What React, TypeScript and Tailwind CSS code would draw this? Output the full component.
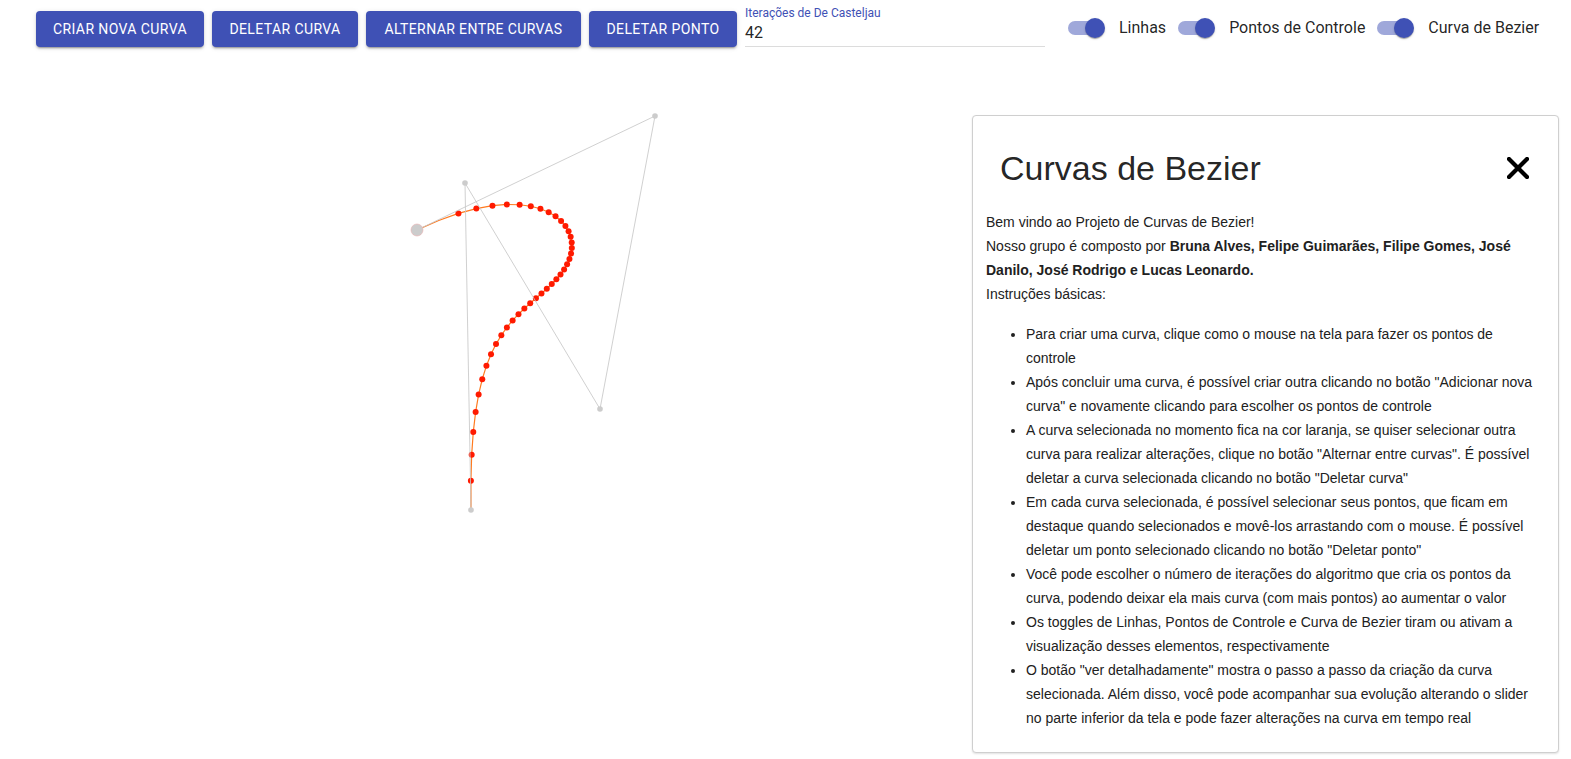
import React from "react";

type Pt = { x: number; y: number };

// control polygon, in page coordinates
const controlPoints: Pt[] = [
  { x: 417, y: 230 },
  { x: 655, y: 116 },
  { x: 600, y: 409 },
  { x: 465, y: 183 },
  { x: 471, y: 510 },
];

const ITERATIONS = 42;
const TOOLBAR_H = 58;

function deCasteljau(points: Pt[], t: number): Pt {
  let pts = points.slice();
  while (pts.length > 1) {
    const next: Pt[] = [];
    for (let i = 0; i < pts.length - 1; i++) {
      next.push({
        x: (1 - t) * pts[i].x + t * pts[i + 1].x,
        y: (1 - t) * pts[i].y + t * pts[i + 1].y,
      });
    }
    pts = next;
  }
  return pts[0];
}

const curve: Pt[] = Array.from({ length: ITERATIONS + 1 }, (_, i) =>
  deCasteljau(controlPoints, i / ITERATIONS)
);

const buttons = [
  { label: "Criar nova curva", w: "w-[168px]" },
  { label: "Deletar curva", w: "w-[146px]" },
  { label: "Alternar entre curvas", w: "w-[215px]" },
  { label: "Deletar ponto", w: "w-[148px]" },
];

const toggles = ["Linhas", "Pontos de Controle", "Curva de Bezier"];

const instructions = [
  "Para criar uma curva, clique como o mouse na tela para fazer os pontos de controle",
  'Após concluir uma curva, é possível criar outra clicando no botão "Adicionar nova curva" e novamente clicando para escolher os pontos de controle',
  'A curva selecionada no momento fica na cor laranja, se quiser selecionar outra curva para realizar alterações, clique no botão "Alternar entre curvas". É possível deletar a curva selecionada clicando no botão "Deletar curva"',
  'Em cada curva selecionada, é possível selecionar seus pontos, que ficam em destaque quando selecionados e movê-los arrastando com o mouse. É possível deletar um ponto selecionado clicando no botão "Deletar ponto"',
  "Você pode escolher o número de iterações do algoritmo que cria os pontos da curva, podendo deixar ela mais curva (com mais pontos) ao aumentar o valor",
  "Os toggles de Linhas, Pontos de Controle e Curva de Bezier tiram ou ativam a visualização desses elementos, respectivamente",
  'O botão "ver detalhadamente" mostra o passo a passo da criação da curva selecionada. Além disso, você pode acompanhar sua evolução alterando o slider no parte inferior da tela e pode fazer alterações na curva em tempo real',
];

function Toggle({ label }: { label: string }) {
  return (
    <div className="flex items-center">
      <span className="relative block h-[38px] w-[58px] flex-none">
        <span className="absolute left-[12px] top-[12px] h-[14px] w-[34px] rounded-full bg-[#9fa8da]" />
        <span className="absolute left-[29px] top-[9px] h-[20px] w-[20px] rounded-full bg-[#3f51b5] shadow-[0_2px_1px_-1px_rgba(0,0,0,0.2),0_1px_1px_0_rgba(0,0,0,0.14),0_1px_3px_0_rgba(0,0,0,0.12)]" />
      </span>
      <span className="ml-[5px] text-[16px] leading-[24px] text-[rgba(0,0,0,0.87)]">{label}</span>
    </div>
  );
}

function Canvas() {
  return (
    <svg width={972} height={759 - TOOLBAR_H} className="block flex-none">
      <g transform={`translate(0,${-TOOLBAR_H})`}>
        <polyline
          points={curve.map((p) => `${p.x},${p.y}`).join(" ")}
          fill="none"
          stroke="#ff7a1f"
          strokeWidth={1.2}
        />
        {curve.slice(2, ITERATIONS).map((p, i) => (
          <circle key={i} cx={p.x} cy={p.y} r={3} fill="#ff1a00" />
        ))}
        <polyline
          points={controlPoints.map((p) => `${p.x},${p.y}`).join(" ")}
          fill="none"
          stroke="#c8c8c8"
          strokeOpacity={0.85}
          strokeWidth={1}
        />
        {controlPoints.map((p, i) =>
          i === 0 ? (
            <circle key={i} cx={p.x} cy={p.y} r={6} fill="#cccccc" stroke="#eab0b0" strokeWidth={0.6} />
          ) : (
            <circle key={i} cx={p.x} cy={p.y} r={2.8} fill="#cccccc" />
          )
        )}
      </g>
    </svg>
  );
}

function InfoCard() {
  return (
    <div className="mt-[57px] h-[638px] w-[587px] flex-none rounded-[4px] border border-[#cfcfcf] bg-white px-[13px] pt-[15px] font-['Liberation_Sans',Arial,sans-serif] text-[14px] leading-[24px] text-[#212121] shadow-[0_1px_2px_rgba(0,0,0,0.12)]">
      <div className="flex items-center justify-between py-4 pl-[14px] pr-[16px]">
        <h1 className="text-[34px] leading-[42px] font-normal text-[rgba(0,0,0,0.87)]">Curvas de Bezier</h1>
        <svg width="22" height="22" viewBox="0 0 22 22">
          <path d="M2 2 L20 20 M20 2 L2 20" stroke="#000" strokeWidth="4.2" strokeLinecap="square" />
        </svg>
      </div>
      <div className="mt-[5px]">
        <p>Bem vindo ao Projeto de Curvas de Bezier!</p>
        <p>
          Nosso grupo é composto por{" "}
          <b>Bruna Alves, Felipe Guimarães, Filipe Gomes, José Danilo, José Rodrigo e Lucas Leonardo.</b>
        </p>
        <p>Instruções básicas:</p>
        <ul className="mt-4 list-disc pl-10">
          {instructions.map((item) => (
            <li key={item}>{item}</li>
          ))}
        </ul>
      </div>
    </div>
  );
}

export default function App() {
  return (
    <div className="h-[759px] w-full overflow-hidden bg-white font-['Roboto',sans-serif]">
      <div className="flex h-[58px] items-start pl-[36px]">
        <div className="mt-[11px] flex gap-2">
          {buttons.map((b) => (
            <button
              key={b.label}
              className={`${b.w} h-[36px] rounded-[4px] bg-[#3f51b5] text-[14px] font-normal uppercase tracking-[0.4px] text-white shadow-[0_3px_1px_-2px_rgba(0,0,0,0.2),0_2px_2px_0_rgba(0,0,0,0.14),0_1px_5px_0_rgba(0,0,0,0.12)]`}
            >
              {b.label}
            </button>
          ))}
        </div>
        <div className="ml-2 mt-[6px] flex w-[300px] flex-col border-b border-[#dcdcdc] pb-[4px]">
          <span className="text-[12px] leading-[14px] text-[#3f51b5]">Iterações de De Casteljau</span>
          <span className="mt-[3px] text-[16px] leading-[19px] text-[rgba(0,0,0,0.87)]">{ITERATIONS}</span>
        </div>
        <div className="ml-[11px] mt-[9px] flex">
          {toggles.map((t) => (
            <Toggle key={t} label={t} />
          ))}
        </div>
      </div>
      <div className="flex">
        <Canvas />
        <InfoCard />
      </div>
    </div>
  );
}
